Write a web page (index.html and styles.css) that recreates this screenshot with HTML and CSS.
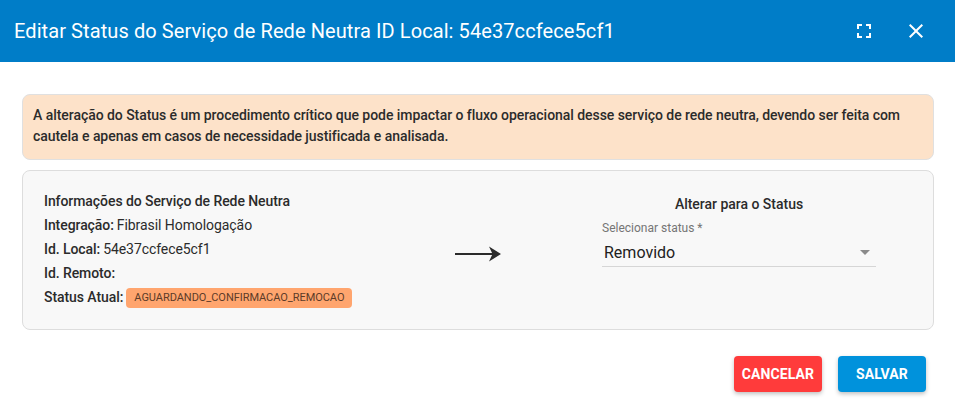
FILE: index.html
```html
<!DOCTYPE html>
<html lang="pt-BR">
<head>
<meta charset="utf-8">
<title>Editar Status</title>
<link rel="stylesheet" href="styles.css">
</head>
<body>
<div class="dialog">
  <header class="topbar">
    <h1 class="title">Editar Status do Serviço de Rede Neutra ID Local: 54e37ccfece5cf1</h1>
    <div class="top-actions">
      <svg class="icon" viewBox="0 0 24 24" width="24" height="24"><path fill="#fff" d="M7 14H5v5h5v-2H7v-3zm-2-4h2V7h3V5H5v5zm12 7h-3v2h5v-5h-2v3zM14 5v2h3v3h2V5h-5z"/></svg>
      <svg class="icon" viewBox="0 0 24 24" width="24" height="24"><path fill="#fff" d="M19 6.41 17.59 5 12 10.59 6.41 5 5 6.41 10.59 12 5 17.59 6.41 19 12 13.41 17.59 19 19 17.59 13.41 12z"/></svg>
    </div>
  </header>
  <main class="content">
    <div class="alert">A alteração do Status é um procedimento crítico que pode impactar o fluxo operacional desse serviço de rede neutra, devendo ser feita com cautela e apenas em casos de necessidade justificada e analisada.</div>
    <section class="panel">
      <div class="info">
        <div class="row strong">Informações do Serviço de Rede Neutra</div>
        <div class="row"><b>Integração:</b> Fibrasil Homologação</div>
        <div class="row"><b>Id. Local:</b> 54e37ccfece5cf1</div>
        <div class="row"><b>Id. Remoto:</b></div>
        <div class="row"><b>Status Atual:</b> <span class="chip">AGUARDANDO_CONFIRMACAO_REMOCAO</span></div>
      </div>
      <div class="arrow-col">
        <svg viewBox="0 0 46 18" width="46" height="18"><path d="M0 9h43" stroke="#2b2b2b" stroke-width="2" fill="none"/><path d="M34 1.500 46 9 34 16.500 37.500 9z" fill="#2b2b2b"/></svg>
      </div>
      <div class="target">
        <div class="target-title">Alterar para o Status</div>
        <div class="select">
          <div class="select-label">Selecionar status *</div>
          <div class="select-value"><span>Removido</span><span class="caret"></span></div>
        </div>
      </div>
    </section>
    <footer class="actions">
      <button class="btn cancel">CANCELAR</button>
      <button class="btn save">SALVAR</button>
    </footer>
  </main>
</div>
</body>
</html>
```

FILE: styles.css
```css
* { box-sizing: border-box; }
html, body { margin: 0; height: 100%; background: #fff; }
body { font-family: Roboto, "Liberation Sans", sans-serif; color: #212121; overflow: hidden; }
.dialog { width: 955px; height: 420px; display: flex; flex-direction: column; }
.topbar { height: 62px; background: #007dc8; display: flex; align-items: center; justify-content: space-between; padding: 0 27px 0 14px; }
.title { margin: 0; font-size: 20px; font-weight: 400; color: #fff; line-height: 24px; letter-spacing: 0.09px; }
.top-actions { display: flex; gap: 28px; }
.icon { display: block; }
.content { padding: 32px 21px 0 22px; display: flex; flex-direction: column; }
.alert { height: 66px; background: #fde2c9; border: 1px solid #e0e0e0; border-radius: 8px; padding: 10px 10px; font-size: 14px; font-weight: 500; line-height: 21px; color: #2b2b2b; letter-spacing: -0.05px; }
.panel { margin-top: 10px; height: 160px; background: #f8f8f8; border: 1px solid #ddd; border-radius: 8px; display: flex; padding: 18px 20px 0 21px; }
.info { width: 411px; }
.row { font-size: 14px; line-height: 24px; height: 24px; color: #2b2b2b; white-space: nowrap; display: flex; align-items: center; gap: 3px; letter-spacing: -0.07px; }
.row b, .row.strong { font-weight: 500; }
.chip { display: inline-block; height: 20px; line-height: 20px; padding: 0 8px; margin-top: 2px; background: #ffa56e; border-radius: 4px; font-size: 11px; letter-spacing: -0.05px; color: #5c3b28; }
.arrow-col { width: 147px; padding-top: 56px; }
.target { width: 274px; display: flex; flex-direction: column; }
.target-title { font-size: 14px; font-weight: 500; text-align: center; line-height: 18px; margin-top: 6px; color: #2b2b2b; letter-spacing: -0.02px; }
.select { margin-top: 8px; }
.select-label { font-size: 12px; line-height: 14px; color: #757575; }
.select-value { height: 30px; margin-top: 2px; padding: 2px 2px 0; font-size: 16px; line-height: 28px; color: #212121; border-bottom: 1px solid #d6d6d6; display: flex; align-items: center; justify-content: space-between; }
.caret { width: 0; height: 0; border-left: 5px solid transparent; border-right: 5px solid transparent; border-top: 5px solid #8a8a8a; margin-right: 4px; }
.actions { margin-top: 26px; display: flex; justify-content: flex-end; gap: 16px; padding-right: 8px; }
.btn { width: 88px; height: 36px; border: 0; border-radius: 4px; color: #fff; font-family: inherit; font-size: 14px; font-weight: 700; letter-spacing: 0.1px; box-shadow: 0 2px 4px rgba(0,0,0,.25); padding: 0; }
.cancel { background: #ff3b3b; }
.save { background: #0092dc; }
```
